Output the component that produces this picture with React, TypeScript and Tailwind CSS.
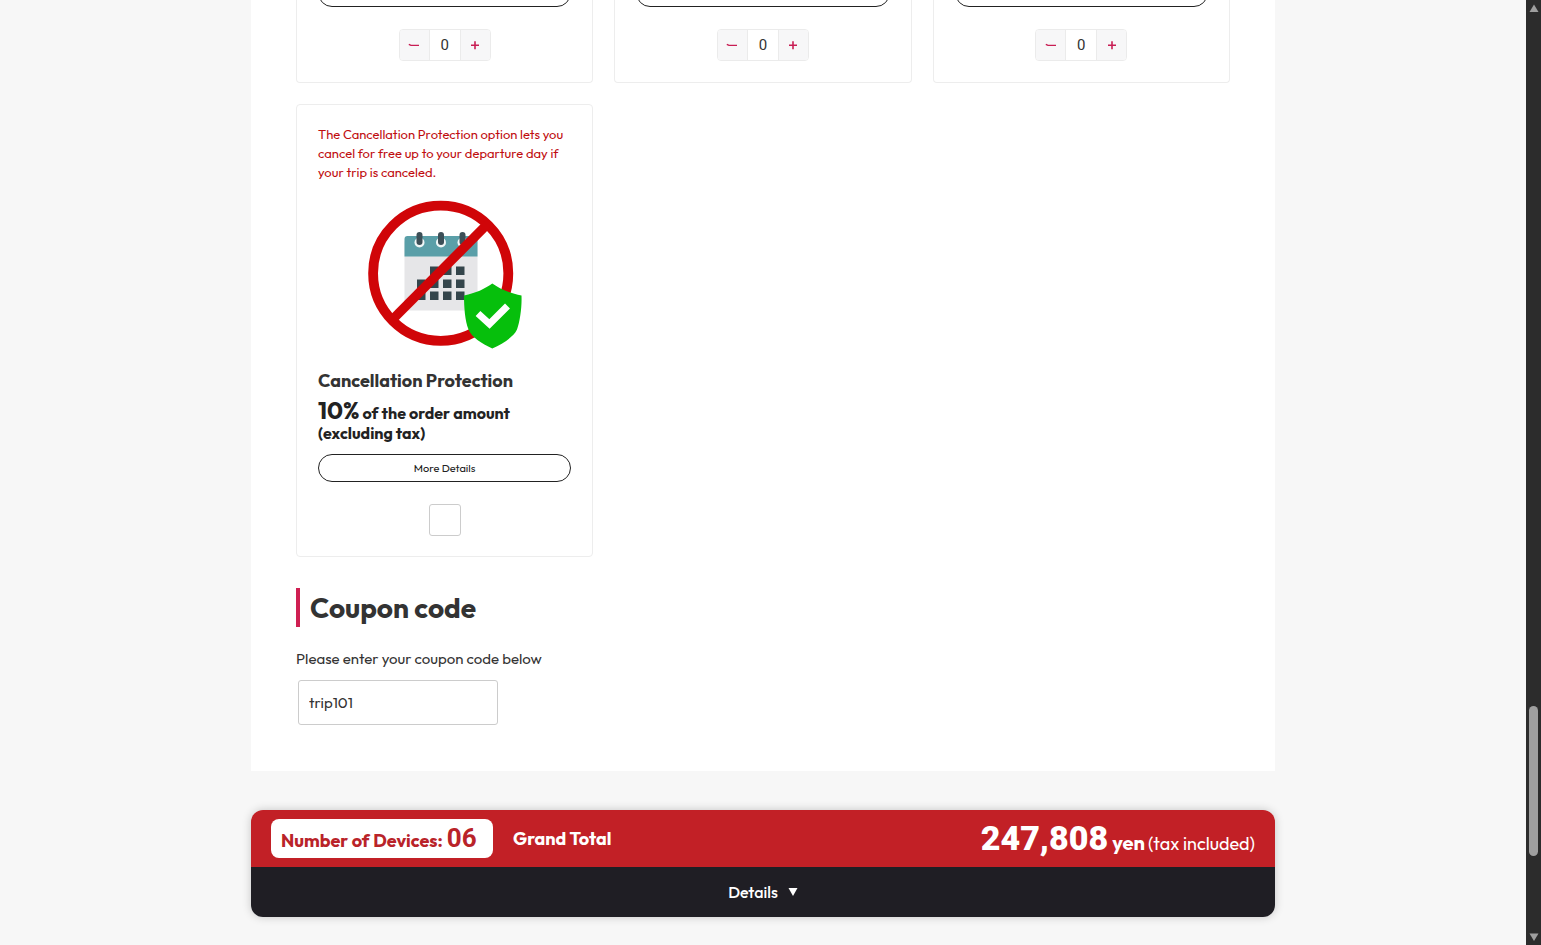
import { useState } from "react";

function Stepper({ name }: { name: string }) {
  const [count, setCount] = useState(0);
  return (
    <div className="flex h-8 w-[92px] shrink-0 overflow-hidden rounded-sm border border-[#ebebeb]">
      <button
        type="button"
        aria-label={`Decrease ${name}`}
        onClick={() => setCount(Math.max(0, count - 1))}
        className="flex w-[30px] items-center justify-center border-r border-[#ebebeb] bg-[#f7f7f8] text-[#c81e54]"
      >
        <svg width="12" height="12" viewBox="0 0 12 12" fill="none" stroke="currentColor" strokeWidth="1.3">
          <path d="M.8 5.400 3 6.400H11" />
        </svg>
      </button>
      <input
        aria-label={`Quantity ${name}`}
        value={count}
        readOnly
        className="w-[30px] flex-1 bg-white text-center font-['Roboto',sans-serif] text-[15px] text-[#333] outline-none"
      />
      <button
        type="button"
        aria-label={`Increase ${name}`}
        onClick={() => setCount(count + 1)}
        className="flex w-[30px] items-center justify-center border-l border-[#ebebeb] bg-[#f7f7f8] text-[#c81e54]"
      >
        <svg width="12" height="12" viewBox="0 0 12 12" fill="none" stroke="currentColor" strokeWidth="1.6">
          <path d="M2 6.300h8M6 2.300v8" />
        </svg>
      </button>
    </div>
  );
}

function OptionCard({ name }: { name: string }) {
  return (
    <div className="flex h-[83px] flex-col items-center justify-end overflow-hidden rounded-b border-x border-b border-[#ededed] bg-white px-[21px] pb-[21px]">
      <button
        type="button"
        aria-label={`More details ${name}`}
        className="mb-[22px] h-7 w-full shrink-0 rounded-full border border-[#222]"
      />
      <Stepper name={name} />
    </div>
  );
}

function CancellationArt() {
  const cells = [
    [75, 76], [88, 76], [101, 76],
    [62, 89], [75, 89], [88, 89], [101, 89],
    [62, 101], [75, 101], [88, 101], [101, 101],
  ];
  return (
    <svg width="180" height="170" viewBox="0 0 180 170" className="mx-auto mt-2 block" aria-hidden="true">
      <rect x="49.500" y="50" width="73" height="70.500" rx="2" fill="#e6e6e8" />
      <path d="M49.500 66.500V49a3 3 0 0 1 3-3h67a3 3 0 0 1 3 3v17.500z" fill="#5a9fa8" />
      {[64.5, 86, 107.5].map((x) => (
        <g key={x}>
          <circle cx={x} cy="52.500" r="5" fill="#f0f7f7" />
          <rect x={x - 3} y="42" width="6" height="13" rx="3" fill="#3c4f57" />
        </g>
      ))}
      {cells.map(([x, y]) => (
        <rect key={`${x}-${y}`} x={x} y={y + 0.5} width="8.500" height="8.500" fill="#34454b" />
      ))}
      <circle cx="85.700" cy="83.200" r="67.600" fill="none" stroke="#d00508" strokeWidth="9.800" />
      <path d="M38.500 128.500 132 34.500" stroke="#d00508" strokeWidth="9.500" />
      <path
        d="M137.300 93.500C145 99 154 103 166.500 105.500C167 117 165 131 162 139.500C158.500 147 148 153.500 137.300 158.500C126.500 153.500 116.500 147 113.500 139.500C110 131 109 117 109 105.500C121 103 129.500 99 137.300 93.500Z"
        fill="#06bf0c"
      />
      <path d="M123 123.500 134.500 134 152.500 116" fill="none" stroke="#fff" strokeWidth="7" />
    </svg>
  );
}

function Scrollbar() {
  return (
    <div aria-hidden="true" className="flex w-[15px] shrink-0 flex-col items-center bg-[#2c2c2c] py-[3px]">
      <svg width="10" height="9" viewBox="0 0 10 9" fill="#9f9f9f">
        <path d="M5 1.500 9.500 9H.5z" />
      </svg>
      <div className="grow-[90]" />
      <div className="h-[150px] w-[9px] rounded-full bg-[#9f9f9f]" />
      <div className="grow-[10]" />
      <svg width="10" height="9" viewBox="0 0 10 9" fill="#9f9f9f">
        <path d="M5 8 .5 .5h9z" />
      </svg>
    </div>
  );
}

export default function App() {
  const [coupon, setCoupon] = useState("trip101");
  return (
    <div className="flex min-h-screen bg-[#f7f7f7] font-['Outfit','Lato',sans-serif] text-[#333]">
      <div className="min-w-0 flex-1 pb-7">
        <div className="mx-auto max-w-5xl">
          <main className="bg-white px-[45px] pb-[46px]">
            <div className="grid grid-cols-3 gap-[21px]">
              <OptionCard name="option 1" />
              <OptionCard name="option 2" />
              <OptionCard name="option 3" />

              <section className="rounded border border-[#ededed] px-[21px] pt-5 pb-5">
                <p className="text-[13px] leading-[19px] text-[#c00d0f]">
                  The Cancellation Protection option lets you
                  <br />
                  cancel for free up to your departure day if
                  <br />
                  your trip is canceled.
                </p>
                <CancellationArt />
                <h3 className="mt-[9px] text-lg leading-6 font-bold">Cancellation Protection</h3>
                <p className="mt-[5px] text-base leading-5 font-bold text-[#222]">
                  <span className="text-2xl leading-6">10%</span> of the order amount
                  <br />
                  (excluding tax)
                </p>
                <button
                  type="button"
                  className="mt-[11px] block h-7 w-full rounded-full border border-[#222] text-[11px] text-[#222]"
                >
                  More Details
                </button>
                <input
                  type="checkbox"
                  aria-label="Add Cancellation Protection"
                  className="mx-auto mt-[22px] block size-8 appearance-none rounded-[3px] border border-[#ccc] bg-white checked:bg-[#c81e54]"
                />
              </section>
            </div>

            <h2 className="mt-[31px] border-l-4 border-[#cf1f52] pl-[10px] text-[28px] leading-[39px] font-bold">
              Coupon code
            </h2>
            <label htmlFor="coupon" className="mt-5 block text-[15px] leading-6">
              Please enter your coupon code below
            </label>
            <input
              id="coupon"
              type="text"
              value={coupon}
              onChange={(e) => setCoupon(e.target.value)}
              className="mt-[9px] ml-0.5 block h-[45px] w-[200px] rounded-[3px] border border-[#ccc] bg-white px-[10px] text-[15px]"
            />
          </main>

          <footer className="mt-[39px] overflow-hidden rounded-xl text-white shadow-[0_0_10px_rgba(0,0,0,0.2)]">
            <div className="flex h-[57px] items-center bg-[#c22026] px-5">
              <div className="flex h-[39px] w-[222px] items-baseline rounded-lg bg-white px-[10px] text-lg leading-[39px] font-bold whitespace-nowrap text-[#b92329]">
                Number of Devices:
                <span className="ml-1 font-['Roboto',sans-serif] text-[26px] leading-[39px]">06</span>
              </div>
              <strong className="ml-5 text-lg font-bold">Grand Total</strong>
              <div className="ml-auto flex items-baseline text-lg">
                <span className="font-['Roboto',sans-serif] text-[34px] leading-[45px] font-black">247,808</span>
                <span className="ml-1 text-xl font-bold">yen</span>
                <span className="ml-[3px]">(tax included)</span>
              </div>
            </div>
            <button
              type="button"
              className="flex h-[50px] w-full items-center justify-center gap-[10px] bg-[#1f1e24] text-base font-medium"
            >
              Details
              <svg width="10" height="8" viewBox="0 0 10 8" fill="currentColor" aria-hidden="true">
                <path d="M.5 0h9L5 8z" />
              </svg>
            </button>
          </footer>
        </div>
      </div>
      <Scrollbar />
    </div>
  );
}
